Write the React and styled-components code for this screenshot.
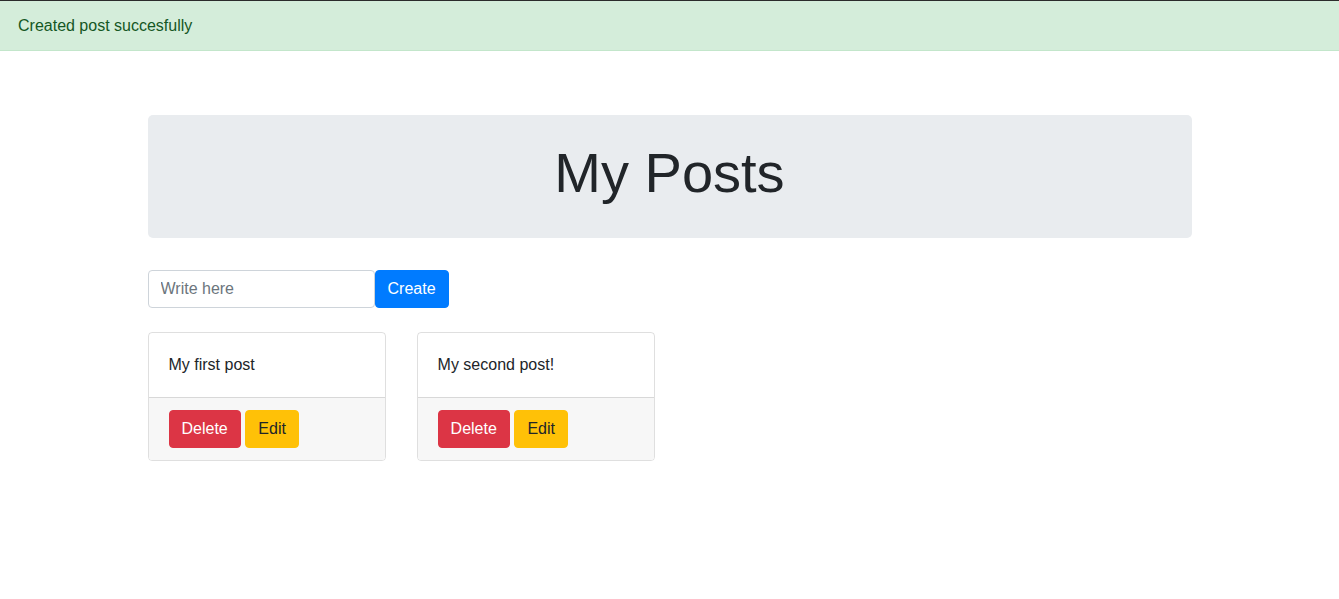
import React from "react";
import styled, { createGlobalStyle } from "styled-components";

const Global = createGlobalStyle`
  * { box-sizing: border-box; }
  body {
    margin: 0;
    font-family: "Liberation Sans", Arial, sans-serif;
    font-size: 16px;
    line-height: 24px;
    color: #212529;
    background: #fff;
  }
`;

const Alert = styled.div`
  border-top: 1px solid #2b2b2b;
  border-bottom: 1px solid #c3e6cb;
  background: #d4edda;
  color: #155724;
  padding: 13px 18px 12px;
`;

const Container = styled.main`
  width: 1044px;
  margin: 64px auto 0;
`;

const Jumbotron = styled.section`
  background: #e9ecef;
  border-radius: 5px;
  height: 123px;
  padding-bottom: 8px;
  display: flex;
  align-items: center;
  justify-content: center;
`;

const Title = styled.h1`
  margin: 0;
  font-size: 56px;
  font-weight: 400;
  line-height: 1.2;
`;

const Form = styled.form`
  display: flex;
  margin-top: 32px;
`;

const Input = styled.input`
  width: 227px;
  height: 38px;
  padding: 6px 12px;
  font: inherit;
  color: #495057;
  border: 1px solid #ced4da;
  border-radius: 4px;
  outline: none;
  &::placeholder { color: #6c757d; }
`;

const Button = styled.button`
  height: 38px;
  padding: 6px 12px;
  font: inherit;
  border: 1px solid ${p => p.$bg};
  background: ${p => p.$bg};
  color: ${p => p.$fg};
  border-radius: 4px;
  cursor: pointer;
`;

const Cards = styled.div`
  display: flex;
  gap: 30.5px;
  margin-top: 24px;
`;

const Card = styled.div`
  width: 238.6px;
  border: 1px solid rgba(0, 0, 0, 0.125);
  border-radius: 4px;
  overflow: hidden;
`;

const CardBody = styled.div`
  padding: 20px;
`;

const CardFooter = styled.div`
  background: #f7f7f7;
  border-top: 1px solid rgba(0, 0, 0, 0.125);
  padding: 12px 20px;
  display: flex;
  gap: 4.6px;
`;

const posts = ["My first post", "My second post!"];

export default function App() {
  return (
    <>
      <Global />
      <Alert>Created post succesfully</Alert>
      <Container>
        <Jumbotron>
          <Title>My Posts</Title>
        </Jumbotron>
        <Form onSubmit={e => e.preventDefault()}>
          <Input placeholder="Write here" />
          <Button $bg="#007bff" $fg="#fff">Create</Button>
        </Form>
        <Cards>
          {posts.map(p => (
            <Card key={p}>
              <CardBody>{p}</CardBody>
              <CardFooter>
                <Button $bg="#dc3545" $fg="#fff">Delete</Button>
                <Button $bg="#ffc107" $fg="#212529">Edit</Button>
              </CardFooter>
            </Card>
          ))}
        </Cards>
      </Container>
    </>
  );
}
